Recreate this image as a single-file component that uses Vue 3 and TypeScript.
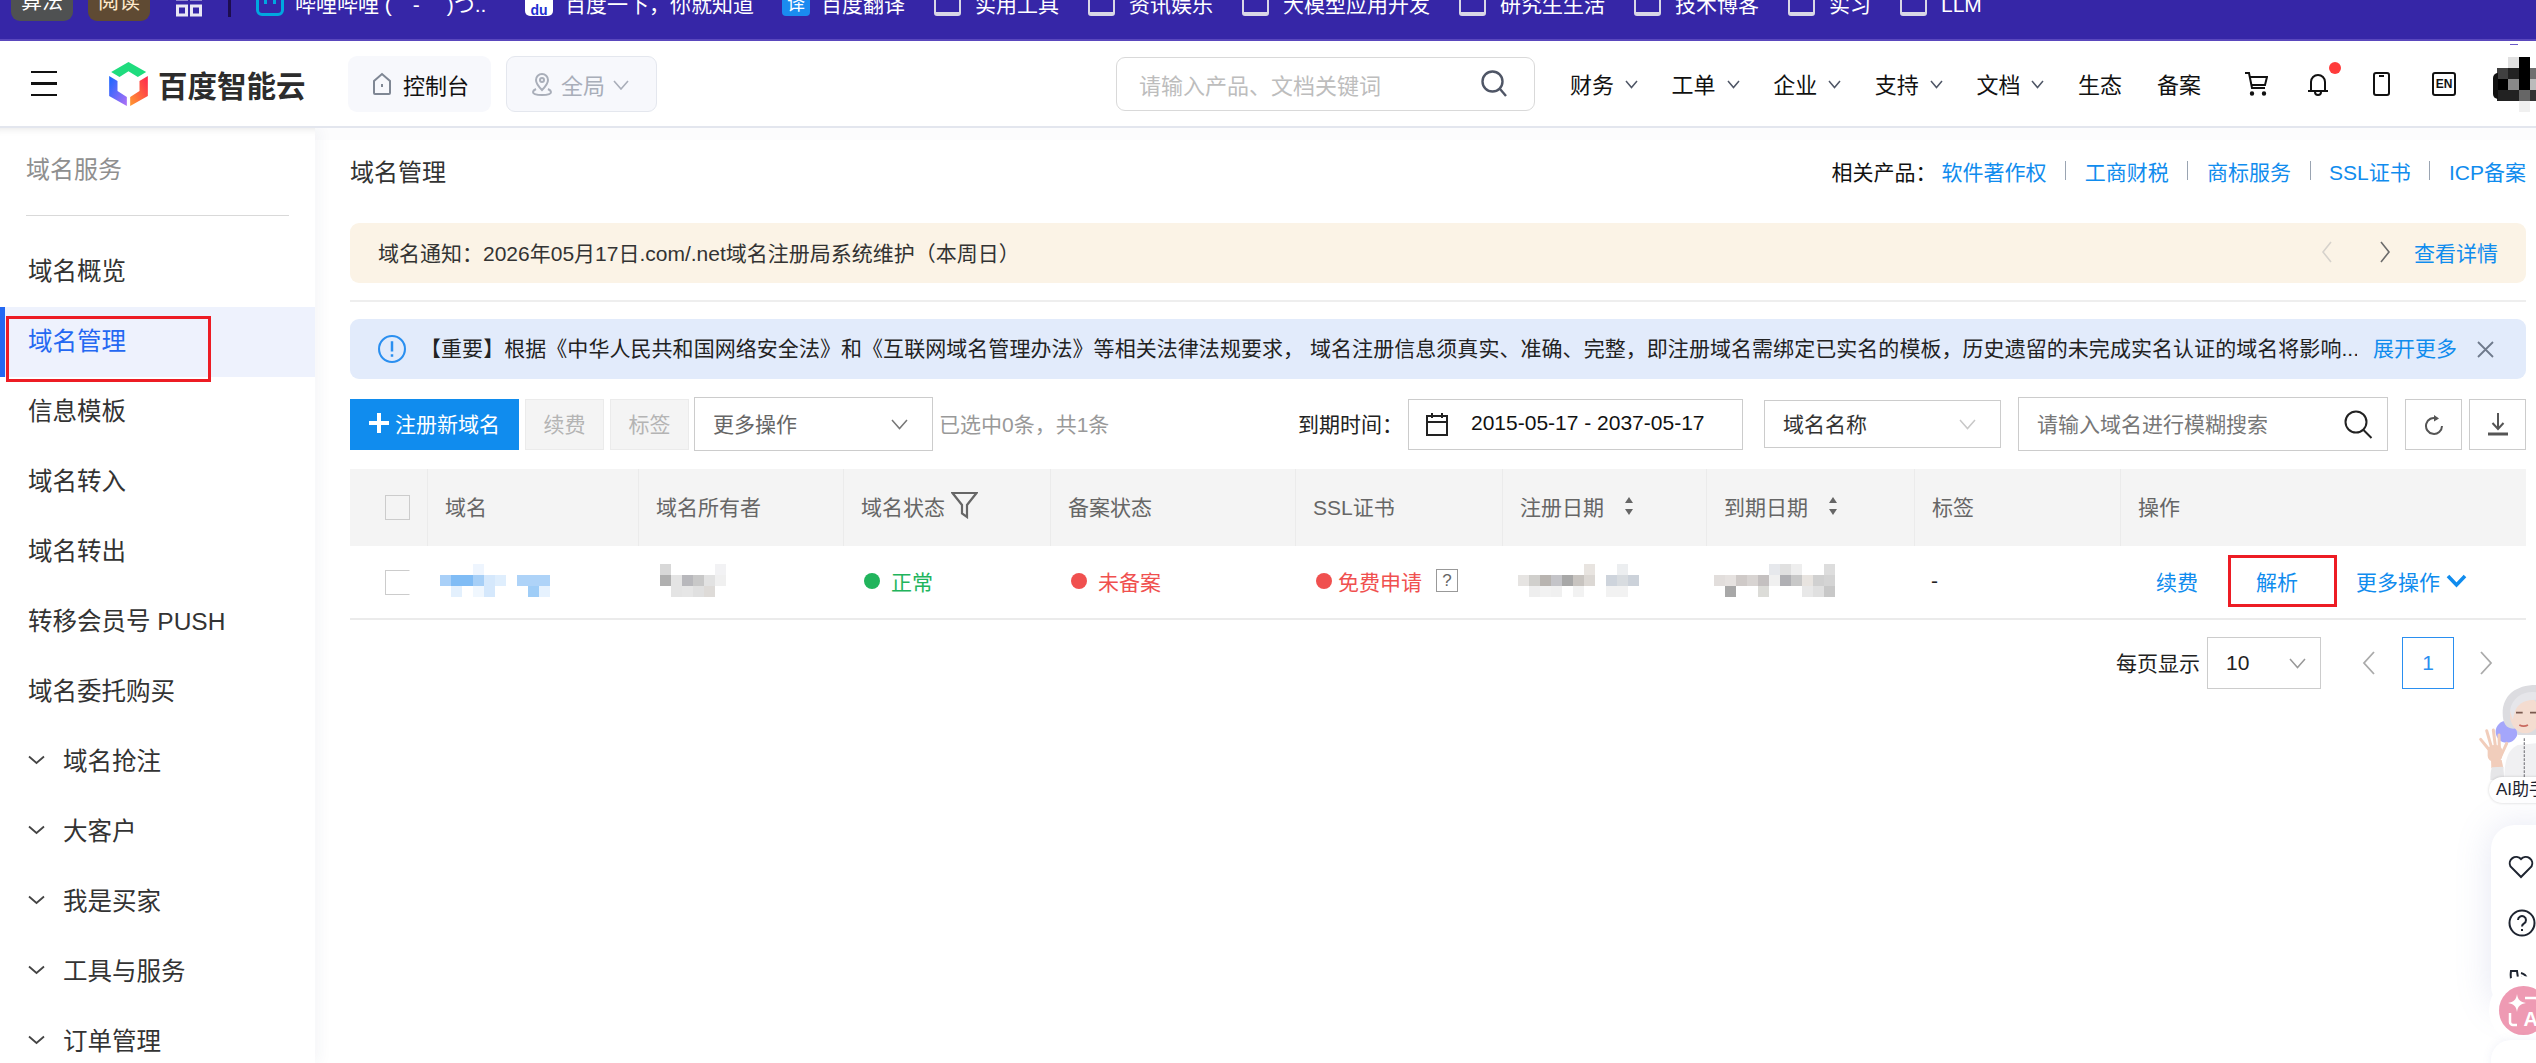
<template>
  <div class="page">
    <!-- browser bookmarks -->
    <div class="bookmarks">
      <span class="chip chip-grey">算法</span>
      <span class="chip chip-brown">阅读</span>
      <svg class="apps" width="26" height="32" viewBox="0 0 26 32"><g fill="none" stroke="#e8e6f4" stroke-width="3"><rect x="1.5" y="3" width="9" height="9" /><rect x="15.5" y="3" width="9" height="9" /><rect x="1.5" y="19" width="9" height="9" /><rect x="15.5" y="19" width="9" height="9" /></g></svg>
      <span class="bar-sep"></span>
      <span class="fav fav-bili"><i></i><i></i></span>
      <span class="mark mark-bili">哔哩哔哩 (゜- ゜)つ...</span>
      <span class="fav fav-du">du</span>
      <span class="mark mark-du">百度一下，你就知道</span>
      <span class="fav fav-yi">译</span>
      <span class="mark">百度翻译</span>
      <template v-for="f in folders" :key="f">
        <span class="folder"></span>
        <span class="mark mark-folder">{{ f }}</span>
      </template>
    </div>

    <!-- top navigation -->
    <header class="topbar">
      <div class="burger"><i></i><i></i><i></i></div>
      <svg class="logo-mark" width="39" height="44" viewBox="27 20 116 132">
        <defs>
          <linearGradient id="lg-l" x1="0" y1="0" x2="1" y2="1"><stop offset="0" stop-color="#1565ff" /><stop offset="1" stop-color="#b070f5" /></linearGradient>
          <linearGradient id="lg-r" x1="1" y1="0" x2="0" y2="1"><stop offset="0" stop-color="#ff2450" /><stop offset="1" stop-color="#ff9a30" /></linearGradient>
        </defs>
        <polygon points="33,50 85,20 138,50 113,65 85,48 58,65" fill="#1fdc7e" />
        <polygon points="27,62 52,77 52,107 80,125 80,152 27,122" fill="url(#lg-l)" />
        <polygon points="143,62 118,77 118,107 90,125 90,152 143,122" fill="url(#lg-r)" />
      </svg>
      <span class="logo-text">百度智能云</span>
      <div class="console-btn">
        <svg width="20" height="26" viewBox="0 0 20 26" fill="none" stroke="#7f8794" stroke-width="2"><path d="M2 10 10 3l8 7v12a1 1 0 0 1-1 1H3a1 1 0 0 1-1-1z" /><path d="M10 13v3" /></svg>
        <span>控制台</span>
      </div>
      <div class="region-btn">
        <svg width="22" height="26" viewBox="0 0 22 26" fill="none" stroke="#a9aeb9" stroke-width="2"><path d="M11 19C7 15 5 12 5 9a6 6 0 0 1 12 0c0 3-2 6-6 10z" /><circle cx="11" cy="9" r="2" /><path d="M5 18c-2 1-3 2-3 3 0 2 4 3 9 3s9-1 9-3c0-1-1-2-3-3" /></svg>
        <span>全局</span>
        <svg class="chev-low" width="16" height="10" viewBox="0 0 16 10" fill="none" stroke="#a9aeb9" stroke-width="1.6"><path d="m1 1 7 8 7-8" /></svg>
      </div>
      <div class="global-search">
        <span>请输入产品、文档关键词</span>
        <svg width="26" height="27" viewBox="0 0 26 27" fill="none" stroke="#4f5666" stroke-width="2.4"><circle cx="11.5" cy="11.5" r="10" /><path d="m19 19 6 7" /></svg>
      </div>
      <nav class="nav">
        <span v-for="n in navMenus" :key="n" class="nav-item">{{ n }}
          <svg class="chev-low" width="13" height="9" viewBox="0 0 13 9" fill="none" stroke="#4f5666" stroke-width="1.5"><path d="m1 1 5.5 6.5L12 1" /></svg>
        </span>
        <span class="nav-plain">生态</span>
        <span class="nav-plain">备案</span>
      </nav>
      <div class="top-icons">
        <svg class="i-cart" width="24" height="24" viewBox="0 0 24 24" fill="none" stroke="#111" stroke-width="2"><path d="M1 1h4l3 15h13" /><path d="M6 5h17l-2 8H8" /><circle cx="8" cy="21.500" r="1.200" fill="#111" /><circle cx="20" cy="21.500" r="1.200" fill="#111" /></svg>
        <span class="bell">
          <svg width="22" height="24" viewBox="0 0 22 24" fill="none" stroke="#111" stroke-width="2"><path d="M1 19h20M4 19V10a7 7 0 0 1 14 0v9" /><path d="M8 20a3 3 0 0 0 6 0" /></svg>
          <i class="bell-dot"></i>
        </span>
        <svg class="i-phone" width="17" height="24" viewBox="0 0 17 24" fill="none" stroke="#111" stroke-width="2"><rect x="1" y="1" width="15" height="22" rx="2" /><path d="M6 4h5" /></svg>
        <span class="en">EN</span>
      </div>
      <div class="mosaic user-mosaic" :style="mosaicStyle(avatarMosaic)">
        <i v-for="(c, i) in avatarMosaic.colors" :key="i" :style="{ background: c }"></i>
      </div>
    </header>

    <div class="body">
      <aside class="sidebar">
        <div class="side-title">域名服务</div>
        <div class="side-line"></div>
        <div v-for="item in menu" :key="item.label" class="side-item" :class="{ active: item.active }">
          <svg v-if="item.group" class="side-chev" width="17" height="10" viewBox="0 0 17 10" fill="none" stroke="#444" stroke-width="1.800"><path d="m1 1.500 7.500 6.500L16 1.500" /></svg>
          <span>{{ item.label }}</span>
          <i v-if="item.active" class="mark-box"></i>
        </div>
      </aside>

      <main class="main">
        <div class="page-head">
          <h1>域名管理</h1>
          <div class="related">
            <span class="related-label">相关产品：</span>
            <template v-for="(p, i) in related" :key="p">
              <i v-if="i > 0" class="related-sep"></i>
              <a>{{ p }}</a>
            </template>
          </div>
        </div>

        <div class="notice">
          <span>域名通知：2026年05月17日.com/.net域名注册局系统维护（本周日）</span>
          <svg class="notice-prev" width="12" height="24" viewBox="0 0 12 24" fill="none" stroke="#d6d2cc" stroke-width="1.600"><path d="M10 2 2 12l8 10" /></svg>
          <svg class="notice-next" width="12" height="24" viewBox="0 0 12 24" fill="none" stroke="#6b6b6b" stroke-width="1.600"><path d="m2 2 8 10-8 10" /></svg>
          <a>查看详情</a>
        </div>
        <div class="divider"></div>

        <div class="alert">
          <svg width="28" height="30" viewBox="0 0 27 28" fill="none"><circle cx="13.500" cy="14" r="12.500" stroke="#2a8ff0" stroke-width="2" /><path d="M13.500 6.500v10M13.500 19v2.500" stroke="#2a8ff0" stroke-width="2.400" /></svg>
          <p>【重要】根据《中华人民共和国网络安全法》和《互联网域名管理办法》等相关法律法规要求， 域名注册信息须真实、准确、完整，即注册域名需绑定已实名的模板，历史遗留的未完成实名认证的域名将影响...</p>
          <a>展开更多</a>
          <svg class="alert-close" width="17" height="17" viewBox="0 0 17 17" stroke="#6f7a8c" stroke-width="1.800"><path d="m1 1 15 15M16 1 1 16" /></svg>
        </div>

        <div class="toolbar">
          <button class="btn-primary"><b class="plus"></b>注册新域名</button>
          <button class="btn-off">续费</button>
          <button class="btn-off">标签</button>
          <div class="select select-more">
            <span>更多操作</span>
            <svg width="17" height="11" viewBox="0 0 17 11" fill="none" stroke="#777" stroke-width="1.500"><path d="m1 1 7.500 8.500L16 1" /></svg>
          </div>
          <span class="picked">已选中0条，共1条</span>
          <div class="tool-right">
            <span class="date-label">到期时间：</span>
            <div class="date-box">
              <svg width="22" height="24" viewBox="0 0 22 24" fill="none" stroke="#222" stroke-width="2"><rect x="1" y="4" width="20" height="19" /><path d="M1 10h20M6 1v5M16 1v5" /></svg>
              <span>2015-05-17 - 2037-05-17</span>
            </div>
            <div class="select select-name">
              <span>域名名称</span>
              <svg width="17" height="11" viewBox="0 0 17 11" fill="none" stroke="#c8c8c8" stroke-width="1.500"><path d="m1 1 7.500 8.500L16 1" /></svg>
            </div>
            <div class="name-search">
              <span>请输入域名进行模糊搜索</span>
              <svg width="29" height="29" viewBox="0 0 29 29" fill="none" stroke="#222" stroke-width="2"><circle cx="12" cy="12" r="10.500" /><path d="m19.500 20 8 8" /></svg>
            </div>
            <button class="btn-icon">
              <svg width="20" height="22" viewBox="0 0 20 22" fill="none" stroke="#555" stroke-width="2"><path d="M13 5.500A8 8 0 1 0 18 13" /><path d="M10 2l5 3.500-5 3" fill="#555" stroke="none" /></svg>
            </button>
            <button class="btn-icon">
              <svg width="22" height="24" viewBox="0 0 22 24" fill="none" stroke="#555" stroke-width="2"><path d="M11 1v15M5.500 11l5.500 6 5.500-6" /><path d="M1 22h20" stroke-width="3" /></svg>
            </button>
          </div>
        </div>

        <div class="table">
          <div class="tr th">
            <div class="cell cell-check"><i class="checkbox"></i></div>
            <div class="cell">域名</div>
            <div class="cell">域名所有者</div>
            <div class="cell">域名状态
              <svg class="filter" width="27" height="28" viewBox="0 0 27 28" fill="none" stroke="#666" stroke-width="2.200"><path d="M1.500 2h24L16 14v12l-5-3.500V14z" /></svg>
            </div>
            <div class="cell">备案状态</div>
            <div class="cell">SSL证书</div>
            <div class="cell">注册日期<span class="sort"><i class="up"></i><i class="down"></i></span></div>
            <div class="cell">到期日期<span class="sort"><i class="up"></i><i class="down"></i></span></div>
            <div class="cell">标签</div>
            <div class="cell">操作</div>
          </div>
          <div class="tr td">
            <div class="cell cell-check"><i class="checkbox checkbox-cut"></i></div>
            <div class="cell cell-domain">
              <div class="mosaic" :style="mosaicStyle(domainMosaic)"><i v-for="(c, i) in domainMosaic.colors" :key="i" :style="{ background: c }"></i></div>
            </div>
            <div class="cell cell-owner">
              <div class="mosaic" :style="mosaicStyle(ownerMosaic)"><i v-for="(c, i) in ownerMosaic.colors" :key="i" :style="{ background: c }"></i></div>
            </div>
            <div class="cell status ok"><i class="dot"></i>正常</div>
            <div class="cell status bad"><i class="dot"></i>未备案</div>
            <div class="cell status bad ssl"><i class="dot"></i>免费申请<span class="help">?</span></div>
            <div class="cell cell-date">
              <div class="mosaic" :style="mosaicStyle(regMosaic)"><i v-for="(c, i) in regMosaic.colors" :key="i" :style="{ background: c }"></i></div>
            </div>
            <div class="cell cell-date2">
              <div class="mosaic" :style="mosaicStyle(expMosaic)"><i v-for="(c, i) in expMosaic.colors" :key="i" :style="{ background: c }"></i></div>
            </div>
            <div class="cell">-</div>
            <div class="cell cell-ops">
              <a>续费</a>
              <a class="ops-marked">解析</a>
              <a class="ops-more">更多操作
                <svg width="21" height="14" viewBox="0 0 21 14" fill="none" stroke="#108cee" stroke-width="3.600"><path d="m2 2 8.500 9L19 2" /></svg>
              </a>
            </div>
          </div>
        </div>

        <div class="pager">
          <span>每页显示</span>
          <div class="select select-size">
            <span>10</span>
            <svg width="17" height="11" viewBox="0 0 17 11" fill="none" stroke="#999" stroke-width="1.500"><path d="m1 1 7.500 8.500L16 1" /></svg>
          </div>
          <svg class="pager-prev" width="14" height="26" viewBox="0 0 14 26" fill="none" stroke="#aaa" stroke-width="1.800"><path d="M12 2 2 13l10 11" /></svg>
          <span class="page-no">1</span>
          <svg class="pager-next" width="14" height="26" viewBox="0 0 14 26" fill="none" stroke="#aaa" stroke-width="1.800"><path d="m2 2 10 11L2 24" /></svg>
        </div>
      </main>
    </div>

    <!-- floating assistant, sits over the page -->
    <div class="assistant">
      <svg class="ai-figure" width="100" height="100" viewBox="0 0 300 300">
        <circle cx="212" cy="155" r="33" fill="#a4a6fb" />
        <path d="M205 300c0-60 10-90 40-105l55-5v110z" fill="#f0f0f2" />
        <path d="M265 175v125" stroke="#8a8a90" stroke-width="4" stroke-dasharray="8 4" />
        <path d="M200 100c0-55 40-85 100-85v150h-55l-5-20c-25 5-40-10-40-45z" fill="#dcdce0" />
        <ellipse cx="268" cy="105" rx="46" ry="55" fill="#f4dcd0" />
        <path d="M222 92c5-38 40-60 78-55v22c-28 0-52 8-62 32l-8 28z" fill="#e6e6ea" />
        <path d="M240 98h20M282 98h18" stroke="#7a5a50" stroke-width="5" />
        <path d="M250 135q13 7 26 0" stroke="#c9695f" stroke-width="5" fill="none" />
        <g stroke="#f1cdbb" stroke-width="9" stroke-linecap="round">
          <path d="M160 210 134 178M166 200 152 152M178 198 172 150M190 202 189 165M196 225 212 190" />
        </g>
        <rect x="155" y="195" width="44" height="50" rx="18" fill="#f1cdbb" />
        <path d="M165 240h32l5 25h-36z" fill="#f1cdbb" />
        <path d="M163 300c0-15 1-30 5-38l34-2 3 40z" fill="#e6e6e8" />
      </svg>
      <div class="ai-pill">AI助手</div>
      <div class="tools">
        <svg width="26" height="24" viewBox="0 0 26 24" fill="none" stroke="#1e2430" stroke-width="2"><path d="M13 22 2.500 11.500A6.500 6.500 0 0 1 13 4a6.500 6.500 0 0 1 10.500 7.500z" /></svg>
        <svg width="28" height="28" viewBox="0 0 28 28" fill="none" stroke="#1e2430" stroke-width="2"><circle cx="14" cy="14" r="12.500" /><path d="M10 11a4 4 0 1 1 6 3.500c-1.500.8-2 1.500-2 3M14 20v2" /></svg>
        <svg class="tool-phone" width="24" height="24" viewBox="0 0 24 24" fill="none" stroke="#1e2430" stroke-width="2"><path d="M3 1h6l1 7-3 2c1 4 3 7 7 9l3 3c-7 3-16-8-14-21z" /><path d="M13 3a8 8 0 0 1 6 6M13 7a4 4 0 0 1 3 3" /></svg>
      </div>
      <div class="translate">
        <div class="translate-disc">
          <svg class="spark" width="18" height="18" viewBox="0 0 22 22"><path d="M11 0c1 7 4 10 11 11-7 1-10 4-11 11-1-7-4-10-11-11 7-1 10-4 11-11z" fill="#fff" /></svg>
          <svg class="corners" width="49" height="49" viewBox="0 0 49 49" fill="none" stroke="#fff" stroke-width="2.500"><path d="M26 12h10a3 3 0 0 1 3 3v4" /><path d="M11 27v9a3 3 0 0 0 3 3h4" /></svg>
          <span>A</span>
        </div>
      </div>
      <div class="fold">
        <svg width="14" height="10" viewBox="0 0 14 10" fill="none" stroke="#222" stroke-width="2"><path d="m1 1 6 6 6-6" /></svg>
      </div>
    </div>
  </div>
</template>

<script setup lang="ts">
interface MenuItem {
  label: string
  active?: boolean
  group?: boolean
}

interface Mosaic {
  cols: number
  cell: number
  colors: string[]
}

const folders = ['实用工具', '资讯娱乐', '大模型应用开发', '研究生生活', '技术博客', '实习', 'LLM']
const navMenus = ['财务', '工单', '企业', '支持', '文档']
const related = ['软件著作权', '工商财税', '商标服务', 'SSL证书', 'ICP备案']

const menu: MenuItem[] = [
  { label: '域名概览' },
  { label: '域名管理', active: true },
  { label: '信息模板' },
  { label: '域名转入' },
  { label: '域名转出' },
  { label: '转移会员号 PUSH' },
  { label: '域名委托购买' },
  { label: '域名抢注', group: true },
  { label: '大客户', group: true },
  { label: '我是买家', group: true },
  { label: '工具与服务', group: true },
  { label: '订单管理', group: true }
]

const w = '#ffffff'

// the reference hides these values behind a pixel mosaic
const domainMosaic: Mosaic = {
  cols: 10,
  cell: 11,
  colors: [
    w, w, w, '#eef5fe', w, w, w, w, w, w,
    '#a9d0f8', '#80bcf5', '#80bcf5', '#a6cff7', '#d5e8fc', '#dfeefd', w, '#aed3f8', '#aed3f8', '#aed3f8',
    w, '#e3f0fd', w, '#f0f7fe', '#d5e8fc', w, w, w, '#9fcdf7', '#e6f2fe'
  ]
}
const ownerMosaic: Mosaic = {
  cols: 6,
  cell: 11,
  colors: [
    '#d8d8d8', w, w, w, w, '#f2f2f4',
    '#b0b0b0', '#e4e4e4', '#b8b8bc', '#c8c8c8', '#e2e2e2', '#f0f0f0',
    w, '#e4e4e4', '#e6e6e6', '#e0e0e0', '#dedbd8', w
  ]
}
const regMosaic: Mosaic = {
  cols: 11,
  cell: 11,
  colors: [
    w, w, w, w, w, w, '#e8e4e0', w, w, '#eceef0', w,
    '#e6e4e2', '#d0cfcc', '#b8b4b0', '#c4c4c8', '#a8a8a8', '#c8c4c0', '#dcd8d4', w, '#ced4dc', '#d8dce0', '#ccd2da',
    w, '#eeeeee', '#f2f2f2', '#f0f0f0', w, '#f2f2f2', w, w, '#f2f2f2', '#f2f2f2', w
  ]
}
const expMosaic: Mosaic = {
  cols: 11,
  cell: 11,
  colors: [
    w, w, w, w, w, '#e6e8ec', '#e0e0e0', '#eeeeee', w, w, '#dddddd',
    '#e2dedc', '#e6e2e0', '#cfcac8', '#d8d4d2', '#c4c0c0', '#f0f0f0', '#b0b0b4', '#c8c8c8', '#e8e4e0', '#d0d0d0', '#d4d4d4',
    w, '#a8a8a8', w, w, '#dcdcd8', w, w, w, '#e8e8e8', '#e0e0e0', '#c8c8c8'
  ]
}
const avatarMosaic: Mosaic = {
  cols: 4,
  cell: 11,
  colors: [
    w, '#e0e0e0', '#000000', w,
    '#404040', '#222222', '#000000', '#707070',
    '#000000', '#888888', '#000000', '#bbbbbb',
    '#222222', '#222222', '#666666', '#333333',
    w, w, '#f0f0f0', w
  ]
}

const mosaicStyle = (m: Mosaic) => ({
  gridTemplateColumns: `repeat(${m.cols}, ${m.cell}px)`,
  gridAutoRows: `${m.cell}px`
})
</script>

<style scoped>
.page {
  position: relative;
  width: 2536px;
  height: 1063px;
  overflow: hidden;
  display: flex;
  flex-direction: column;
  background: #fff;
  font-family: "Liberation Sans", "Noto Sans CJK SC", sans-serif;
  font-size: 21px;
  color: #222;
}

i {
  display: block;
  font-style: normal;
}

a {
  color: #108cee;
  cursor: pointer;
}

button {
  font-family: inherit;
  cursor: pointer;
}

.bookmarks {
  height: 39px;
  flex: none;
  box-sizing: content-box;
  border-bottom: 2px solid #5a48bd;
  background: #3626a7;
  display: flex;
  align-items: flex-start;
  overflow: hidden;
  padding-left: 11px;
  color: #fff;
}

.chip {
  width: 62px;
  height: 40px;
  margin-top: -19px;
  border-radius: 9px;
  display: flex;
  align-items: center;
  justify-content: center;
  flex: none;
  line-height: 44px;
}

.chip-grey {
  background: #4f5152;
}

.chip-brown {
  background: #5f4a33;
  color: #ffe9cc;
  margin-left: 15px;
}

.apps {
  margin-top: -13px;
  margin-left: 26px;
  flex: none;
}

.bar-sep {
  width: 3px;
  height: 30px;
  margin-top: -13px;
  margin-left: 26px;
  background: #1d0d4f;
  flex: none;
}

.fav {
  width: 28px;
  height: 30px;
  margin-top: -14px;
  flex: none;
}

.fav-bili {
  margin-left: 25px;
  border: 3px solid #00a8e0;
  border-radius: 6px;
  box-sizing: border-box;
  display: flex;
  justify-content: center;
  align-items: flex-end;
  gap: 6px;
  padding-bottom: 9px;
}

.fav-bili i {
  width: 3px;
  height: 4px;
  background: #00a8e0;
}

.fav-du {
  margin-left: 38px;
  background: #fff;
  border-radius: 5px;
  color: #1d2fd0;
  font-size: 14px;
  font-weight: 700;
  line-height: 48px;
  text-align: center;
}

.fav-yi {
  margin-left: 28px;
  background: #1a8bf0;
  border-radius: 4px;
  font-size: 18px;
  line-height: 36px;
  text-align: center;
}

.mark {
  margin-top: -13px;
  margin-left: 11px;
  line-height: 36px;
  white-space: nowrap;
  flex: none;
}

.mark-bili {
  width: 192px;
  overflow: hidden;
}

.mark-du {
  margin-left: 12px;
}

.mark-folder {
  margin-left: 14px;
}

.folder {
  width: 27px;
  height: 30px;
  margin-top: -14px;
  margin-left: 29px;
  box-sizing: border-box;
  border: 2px solid #d9d7e6;
  border-bottom-width: 4px;
  border-radius: 3px;
  flex: none;
}

.topbar {
  height: 87px;
  flex: none;
  box-sizing: border-box;
  border-bottom: 2px solid #e3e6ee;
  display: flex;
  align-items: center;
  padding-left: 31px;
  position: relative;
  z-index: 3;
  background: #fff;
  font-size: 22px;
  color: #111;
}

.burger {
  width: 26px;
  display: flex;
  flex-direction: column;
  gap: 9px;
  flex: none;
}

.burger i {
  height: 2.5px;
  background: #111;
}

.logo-mark {
  margin-left: 52px;
  flex: none;
}

.logo-text {
  margin-left: 10px;
  width: 148px;
  font-size: 29.500px;
  font-weight: 700;
  color: #2c2c2c;
  white-space: nowrap;
  flex: none;
}

.console-btn,
.region-btn {
  height: 56px;
  box-sizing: border-box;
  border-radius: 9px;
  background: #f7f8fc;
  display: flex;
  align-items: center;
  flex: none;
}

.console-btn {
  width: 143px;
  margin-left: 42px;
  padding-left: 24px;
  gap: 11px;
}

.region-btn {
  width: 151px;
  margin-left: 15px;
  padding-left: 24px;
  gap: 8px;
  border: 1px solid #e4e7ee;
  color: #a9aeb9;
}

.chev-low {
  margin-top: 3px;
}

.global-search {
  width: 419px;
  height: 54px;
  box-sizing: border-box;
  margin-left: 459px;
  padding: 0 27px 0 22px;
  border: 1px solid #d9d9d9;
  border-radius: 9px;
  display: flex;
  align-items: center;
  justify-content: space-between;
  color: #bdbdbd;
  flex: none;
}

.nav {
  display: flex;
  align-items: center;
  margin-left: 35px;
  margin-bottom: 2px;
  flex: none;
}

.nav-item {
  width: 101.6px;
  display: flex;
  align-items: center;
  gap: 11px;
  white-space: nowrap;
}

.nav-plain {
  width: 79px;
}

.top-icons {
  display: flex;
  align-items: center;
  margin-left: 8px;
  flex: none;
}

.bell {
  position: relative;
  margin-left: 39px;
  display: flex;
}

.bell-dot {
  position: absolute;
  left: 22px;
  top: -10px;
  width: 12px;
  height: 12px;
  border-radius: 50%;
  background: #ff3b3b;
}

.i-phone {
  margin-left: 44px;
}

.en {
  margin-left: 42px;
  width: 24px;
  height: 24px;
  box-sizing: border-box;
  border: 2px solid #111;
  border-radius: 3px;
  font-size: 12px;
  font-weight: 700;
  line-height: 20px;
  text-align: center;
}

.mosaic {
  display: grid;
  flex: none;
}

.user-mosaic {
  position: relative;
  margin-left: 41px;
  margin-top: 1px;
}

.user-mosaic::before {
  content: "";
  position: absolute;
  left: -4px;
  top: 16px;
  width: 5px;
  height: 26px;
  border-radius: 5px 0 0 5px;
  background: #111;
}

.user-mosaic::after {
  content: "";
  position: absolute;
  left: 13px;
  top: -13px;
  width: 8px;
  height: 1px;
  background: #6a5ac8;
}

.body {
  flex: 1;
  min-height: 0;
  display: flex;
}

.sidebar {
  width: 315px;
  flex: none;
  box-shadow: 4px 0 14px rgba(40, 50, 90, 0.05), inset 0 9px 9px -9px rgba(0, 0, 0, 0.12);
  background: #fff;
  position: relative;
  z-index: 2;
  overflow: hidden;
}

.side-title {
  margin: 23px 26px 0;
  line-height: 38px;
  font-size: 24px;
  color: #8f8f8f;
}

.side-line {
  margin: 26px 26px 21px;
  height: 1px;
  background: #d9d9d9;
}

.side-item {
  position: relative;
  height: 70px;
  box-sizing: border-box;
  padding: 0 0 5px 28px;
  display: flex;
  align-items: center;
  gap: 18px;
  font-size: 24.500px;
  color: #333;
}

.side-item.active {
  background: #eef2fd;
  color: #2468f2;
  box-shadow: inset 5px 0 0 #2468f2;
}

.mark-box {
  position: absolute;
  left: 6px;
  top: 9px;
  width: 205px;
  height: 66px;
  box-sizing: border-box;
  border: 3px solid #ed1c24;
}

.main {
  flex: 1;
  min-width: 0;
  padding: 0 10px 0 35px;
  background: linear-gradient(#fcfcfd 12px, #fff 12px);
}

.page-head {
  height: 40px;
  box-sizing: border-box;
  padding-bottom: 3px;
  margin: 24px 0 31px;
  display: flex;
  align-items: center;
  justify-content: space-between;
}

.page-head h1 {
  margin: 0;
  font-size: 24px;
  font-weight: 400;
  color: #333;
}

.related {
  display: flex;
  align-items: center;
  color: #111;
}

.related-label {
  margin-right: 5px;
}

.related-sep {
  width: 1px;
  height: 19px;
  margin: 0 18.6px;
  background: #9aa4b2;
}

.notice {
  height: 60px;
  box-sizing: border-box;
  border-radius: 9px;
  background: #fbf3e6;
  display: flex;
  align-items: center;
  padding: 0 28px 2px 28px;
  color: #333;
}

.notice > span {
  flex: 1;
}

.notice-next {
  margin-left: 46px;
}

.notice a {
  margin-left: 23px;
}

.divider {
  height: 2px;
  margin: 17px 0;
  background: #eeeeee;
}

.alert {
  height: 60px;
  border-radius: 9px;
  background: #e2ebfb;
  display: flex;
  align-items: center;
  padding-left: 28px;
  color: #222;
}

.alert p {
  margin: 0 0 4px 14px;
  width: 1937px;
  letter-spacing: 0.05px;
  white-space: nowrap;
  overflow: hidden;
  flex: none;
}

.alert a {
  margin: 0 0 4px 16px;
}

.alert-close {
  margin-left: 20px;
}

.toolbar {
  height: 54px;
  margin-top: 18px;
  display: flex;
  align-items: center;
}

.toolbar span {
  margin-bottom: 2px;
}

.btn-primary {
  width: 169px;
  height: 51px;
  border: 0;
  background: #108cee;
  color: #fff;
  font-size: 21px;
  display: flex;
  align-items: center;
  padding: 0 0 2px 19px;
  gap: 6px;
}

.plus {
  position: relative;
  width: 20px;
  height: 4px;
  background: #fff;
}

.plus::after {
  content: "";
  position: absolute;
  left: 8px;
  top: -8px;
  width: 4px;
  height: 20px;
  background: #fff;
}

.btn-off {
  width: 79px;
  height: 51px;
  margin-left: 6px;
  border: 1px solid #ebebeb;
  background: #f4f4f4;
  color: #b4b4b4;
  font-size: 21px;
  padding: 0 0 2px;
}

.select {
  box-sizing: border-box;
  border: 1px solid #ccc;
  display: flex;
  align-items: center;
  justify-content: space-between;
  flex: none;
  background: #fff;
}

.select-more {
  width: 239px;
  height: 54px;
  margin-left: 5px;
  padding: 0 24px 0 18px;
  color: #666;
}

.picked {
  margin-left: 6px;
  color: #999;
}

.tool-right {
  margin-left: auto;
  display: flex;
  align-items: center;
}

.date-label {
  margin-right: 18px;
  width: 92px;
  white-space: nowrap;
  color: #222;
}

.date-box {
  width: 335px;
  height: 51px;
  box-sizing: border-box;
  border: 1px solid #ccc;
  display: flex;
  align-items: center;
  padding-left: 17px;
  gap: 23px;
  color: #111;
}

.select-name {
  width: 237px;
  height: 48px;
  margin-left: 21px;
  padding: 0 24px 0 18px;
}

.select-name span {
  color: #333;
}

.name-search {
  width: 370px;
  height: 54px;
  margin-left: 17px;
  box-sizing: border-box;
  border: 1px solid #ccc;
  display: flex;
  align-items: center;
  justify-content: space-between;
  padding: 0 14px 0 18px;
  color: #777;
}

.btn-icon {
  width: 57px;
  height: 51px;
  margin-left: 17px;
  border: 1px solid #ccc;
  background: #fff;
  padding: 0;
  display: flex;
  align-items: center;
  justify-content: center;
}

.btn-icon + .btn-icon {
  margin-left: 7px;
}

.table {
  margin-top: 18px;
}

.tr {
  display: grid;
  grid-template-columns: 77px 211px 205px 207px 245px 207px 204px 208px 206px 1fr;
}

.th {
  height: 77px;
  background: #f4f4f4;
  color: #666;
}

.th .cell {
  padding-bottom: 4px;
}

.th .cell + .cell {
  border-left: 1px solid #ebebeb;
}

.td {
  height: 74px;
  box-sizing: border-box;
  border-bottom: 2px solid #ebebeb;
  color: #222;
}

.td .cell {
  padding-bottom: 3px;
}

.cell {
  box-sizing: border-box;
  display: flex;
  align-items: center;
  padding-left: 17px;
  min-width: 0;
  white-space: nowrap;
}

.cell-check {
  padding-left: 35px;
}

.th .cell-check {
  padding-bottom: 0;
}

.td .cell-check {
  padding-bottom: 0;
}

.checkbox {
  width: 25px;
  height: 25px;
  box-sizing: border-box;
  border: 1px solid #ccc;
}

.checkbox-cut {
  border-right-color: #fff;
}

.filter {
  margin-left: 6px;
  margin-top: -1px;
}

.sort {
  margin-left: 21px;
  display: flex;
  flex-direction: column;
  gap: 6px;
}

.up,
.down {
  width: 0;
  height: 0;
  border-left: 4.500px solid transparent;
  border-right: 4.500px solid transparent;
}

.up {
  border-bottom: 6px solid #666;
}

.down {
  border-top: 6px solid #666;
}

.cell-domain {
  padding-left: 13px;
}

.cell-owner {
  padding-left: 22px;
}

.cell-date {
  padding-left: 16px;
}

.cell-date2 {
  padding-left: 8px;
}

.status {
  padding-left: 21px;
  gap: 11px;
}

.ssl {
  gap: 6px;
}

.dot {
  width: 16px;
  height: 16px;
  border-radius: 50%;
}

.ok {
  color: #21b45c;
}

.ok .dot {
  background: #21b45c;
}

.bad {
  color: #f0504f;
}

.bad .dot {
  background: #f0504f;
}

.help {
  margin-left: 8px;
  width: 22px;
  height: 23px;
  box-sizing: border-box;
  border: 1px solid #999;
  color: #666;
  font-size: 17px;
  line-height: 21px;
  text-align: center;
}

.cell-ops {
  padding-left: 36px;
}

.ops-marked {
  width: 109px;
  height: 52px;
  margin-left: 30px;
  box-sizing: border-box;
  border: 3px solid #ed1c24;
  display: flex;
  align-items: center;
  padding-left: 25px;
}

.ops-more {
  margin-left: 19px;
  display: flex;
  align-items: center;
  gap: 6px;
}

.pager {
  height: 52px;
  margin-top: 17px;
  display: flex;
  align-items: center;
  justify-content: flex-end;
  padding-right: 33px;
  color: #222;
}

.pager > span:first-child {
  margin-bottom: 2px;
}

.select-size {
  width: 114px;
  height: 52px;
  margin-left: 7px;
  padding: 0 14px 0 18px;
}

.pager-prev {
  margin-left: 41px;
}

.page-no {
  width: 52px;
  height: 52px;
  margin-left: 26px;
  box-sizing: border-box;
  border: 1px solid #2a8ff0;
  color: #2a8ff0;
  line-height: 50px;
  text-align: center;
}

.pager-next {
  margin-left: 25px;
}

.assistant {
  position: absolute;
  left: 2436px;
  top: 680px;
  width: 100px;
  height: 383px;
  z-index: 5;
}

.ai-figure {
  position: absolute;
  left: 0;
  top: 0;
}

.ai-pill {
  position: absolute;
  left: 53px;
  top: 97px;
  width: 70px;
  height: 26px;
  box-sizing: border-box;
  padding-left: 7px;
  border-radius: 13px;
  background: #fff;
  box-shadow: 0 0 3px rgba(0, 0, 0, 0.18);
  color: #1e2430;
  font-size: 17px;
  line-height: 26px;
  white-space: nowrap;
}

.tools {
  position: absolute;
  left: 55px;
  top: 145px;
  width: 70px;
  height: 185px;
  border-radius: 24px;
  background: #fff;
  box-shadow: 0 0 36px rgba(110, 120, 190, 0.18);
  display: flex;
  flex-direction: column;
  align-items: flex-start;
  gap: 30px;
  padding: 30px 0 0 17px;
  box-sizing: border-box;
}

.tool-phone {
  margin-top: 3px;
}

.translate {
  position: absolute;
  left: 53px;
  top: 296px;
  width: 68px;
  height: 68px;
  border-radius: 50%;
  background: #fff;
  display: flex;
  align-items: center;
  justify-content: center;
}

.translate-disc {
  position: relative;
  width: 49px;
  height: 49px;
  border-radius: 50%;
  background: #ee9ab3;
  flex: none;
  overflow: hidden;
}

.spark {
  position: absolute;
  left: 9px;
  top: 8px;
}

.corners {
  position: absolute;
  left: 0;
  top: 0;
}

.translate-disc span {
  position: absolute;
  left: 25px;
  top: 20px;
  color: #fff;
  font-size: 20px;
  font-weight: 700;
  line-height: 26px;
}

.fold {
  position: absolute;
  left: 55px;
  top: 360px;
  width: 70px;
  height: 40px;
  border-radius: 24px;
  background: #fff;
  box-shadow: 0 0 10px rgba(110, 120, 190, 0.1);
  padding: 16px 0 0 24px;
  box-sizing: border-box;
}
</style>

<style>
html,
body {
  margin: 0;
  overflow: hidden;
}
</style>
